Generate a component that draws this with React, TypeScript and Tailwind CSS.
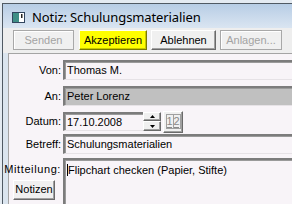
import React from "react";

const raised =
  "border border-t-white border-l-white border-r-[#6a6a6a] border-b-[#6a6a6a] shadow-[inset_-1px_-1px_0_#a0a0a0]";
const sunken =
  "border-t-2 border-l-2 border-t-[#7c7c7c] border-l-[#7c7c7c] border-b border-b-[#e6e2e6] shadow-[inset_1px_1px_0_#9a9a9a]";

function ToolButton({ label, w, ml, variant }: { label: string; w: string; ml: string; variant: "off" | "hi" | "on" }) {
  const base = `${w} ${ml} h-[20px] flex items-center justify-center text-[11px] leading-none`;
  if (variant === "hi")
    return (
      <div className={`${base} bg-[#ffff00] text-black border border-[#7a7a00] border-t-[#fffff0] border-l-[#fffff0] shadow-[inset_-1px_-1px_0_#c8c800]`}>
        {label}
      </div>
    );
  if (variant === "on")
    return <div className={`${base} bg-[#f0f0f0] text-black ${raised}`}>{label}</div>;
  return (
    <div className={`${base} bg-[#f0f0f0] text-[#a3a3a3] border border-[#a8a8a8] shadow-[inset_1px_1px_0_#ffffff]`}>
      {label}
    </div>
  );
}

function Label({ text }: { text: string }) {
  return <div className="w-[52px] shrink-0 text-right text-[11px] text-black whitespace-nowrap">{text}</div>;
}

export default function App() {
  return (
    <div className="w-[292px] h-[204px] overflow-hidden bg-[#e4ebf2] font-['Liberation_Sans',Arial,sans-serif]">
      <div className="ml-[2px] mt-[3px] h-[201px] border-l border-t border-[#505a64] bg-[#dbe5ef] flex flex-col">
        {/* title bar */}
        <div className="h-[24px] shrink-0 flex items-center bg-gradient-to-b from-[#b7cde5] to-[#dae5f1]">
          <svg width="13" height="11" viewBox="0 0 13 11" className="ml-[9px] mt-[3px]">
            <rect x="0.5" y="0.5" width="12" height="10" fill="#ffffff" stroke="#31455e" />
            <rect x="1" y="1" width="6" height="9" fill="#3f8f86" />
            <rect x="9" y="2" width="1.5" height="4" fill="#222" />
          </svg>
          <span className="ml-[7px] mt-[3px] text-[13px] text-black font-['Noto_Sans',sans-serif] tracking-[-0.1px]">
            Notiz: Schulungsmaterialien
          </span>
        </div>
        {/* toolbar */}
        <div className="h-[25px] shrink-0 bg-[#eeeeee] flex items-start pt-[2px]">
          <ToolButton label="Senden" w="w-[61px]" ml="ml-[10px]" variant="off" />
          <ToolButton label="Akzeptieren" w="w-[68px]" ml="ml-[5px]" variant="hi" />
          <ToolButton label="Ablehnen" w="w-[65px]" ml="ml-[4px]" variant="on" />
          <ToolButton label="Anlagen..." w="w-[62px]" ml="ml-[4px]" variant="off" />
        </div>
        {/* form */}
        <div className="flex-1 ml-[5px] border-l border-t border-[#a4a4a4] bg-[#f8f4f8] flex flex-col">
          <div className="mt-[6px] h-[20px] flex items-center">
            <Label text="Von:" />
            <div className={`ml-[2px] flex-1 h-full flex items-center pl-[2px] text-[11px] ${sunken}`}>Thomas M.</div>
          </div>
          <div className="mt-[6px] h-[20px] flex items-center">
            <Label text="An:" />
            <div className={`ml-[2px] flex-1 h-full flex items-center pl-[2px] text-[11px] bg-[#c0c0c0] ${sunken}`}>
              Peter Lorenz
            </div>
          </div>
          <div className="mt-[4px] h-[23px] flex items-center">
            <Label text="Datum:" />
            <div className={`ml-[2px] w-[80px] h-[19px] flex items-center pl-[2px] text-[11px] ${sunken}`}>17.10.2008</div>
            <div className="w-[18px] h-[19px] flex flex-col">
              <div className={`h-[9px] flex items-center justify-center bg-[#f0f0f0] ${raised}`}>
                <svg width="5" height="3" viewBox="0 0 5 3">
                  <path d="M2.5 0 L5 3 L0 3 Z" fill="#000" />
                </svg>
              </div>
              <div className={`h-[10px] flex items-center justify-center bg-[#f0f0f0] ${raised}`}>
                <svg width="5" height="3" viewBox="0 0 5 3">
                  <path d="M0 0 L5 0 L2.5 3 Z" fill="#000" />
                </svg>
              </div>
            </div>
            <div className={`ml-[2px] w-[20px] h-[22px] flex items-center justify-center bg-[#f0f0f0] ${raised}`}>
              <div className="w-[15px] h-[15px] border border-[#a0a0a0] flex items-stretch text-[11px] leading-[12px] text-[#8a8a8a]">
                <div className="w-[7px] flex flex-col items-center border-r border-[#a0a0a0]">
                  <span>1</span>
                  <span className="w-[5px] h-[1px] bg-[#8a8a8a]" />
                </div>
                <div className="flex-1 flex flex-col items-center">
                  <span>2</span>
                  <span className="w-[5px] h-[1px] bg-[#8a8a8a]" />
                </div>
              </div>
            </div>
          </div>
          <div className="mt-[1px] h-[20px] flex items-center">
            <Label text="Betreff:" />
            <div className={`ml-[2px] flex-1 h-full flex items-center pl-[2px] text-[11px] ${sunken}`}>
              Schulungsmaterialien
            </div>
          </div>
          <div className="mt-[4px] flex-1 flex items-start">
            <div className="w-[52px] shrink-0 flex flex-col items-end">
              <div className="mt-[3px] text-[11px] text-right whitespace-nowrap tracking-[0.6px]">Mitteilung:</div>
              <div className={`mt-[2px] mr-[6px] w-[42px] h-[20px] flex items-center justify-center bg-[#f0f0f0] text-[11px] ${raised}`}>
                Notizen
              </div>
            </div>
            <div className={`ml-[2px] flex-1 self-stretch pl-[2px] pt-[2px] text-[11px] ${sunken} border-b-0`}>
              <span className="border-l border-black">Flipchart checken (Papier, Stifte)</span>
            </div>
          </div>
        </div>
      </div>
    </div>
  );
}
